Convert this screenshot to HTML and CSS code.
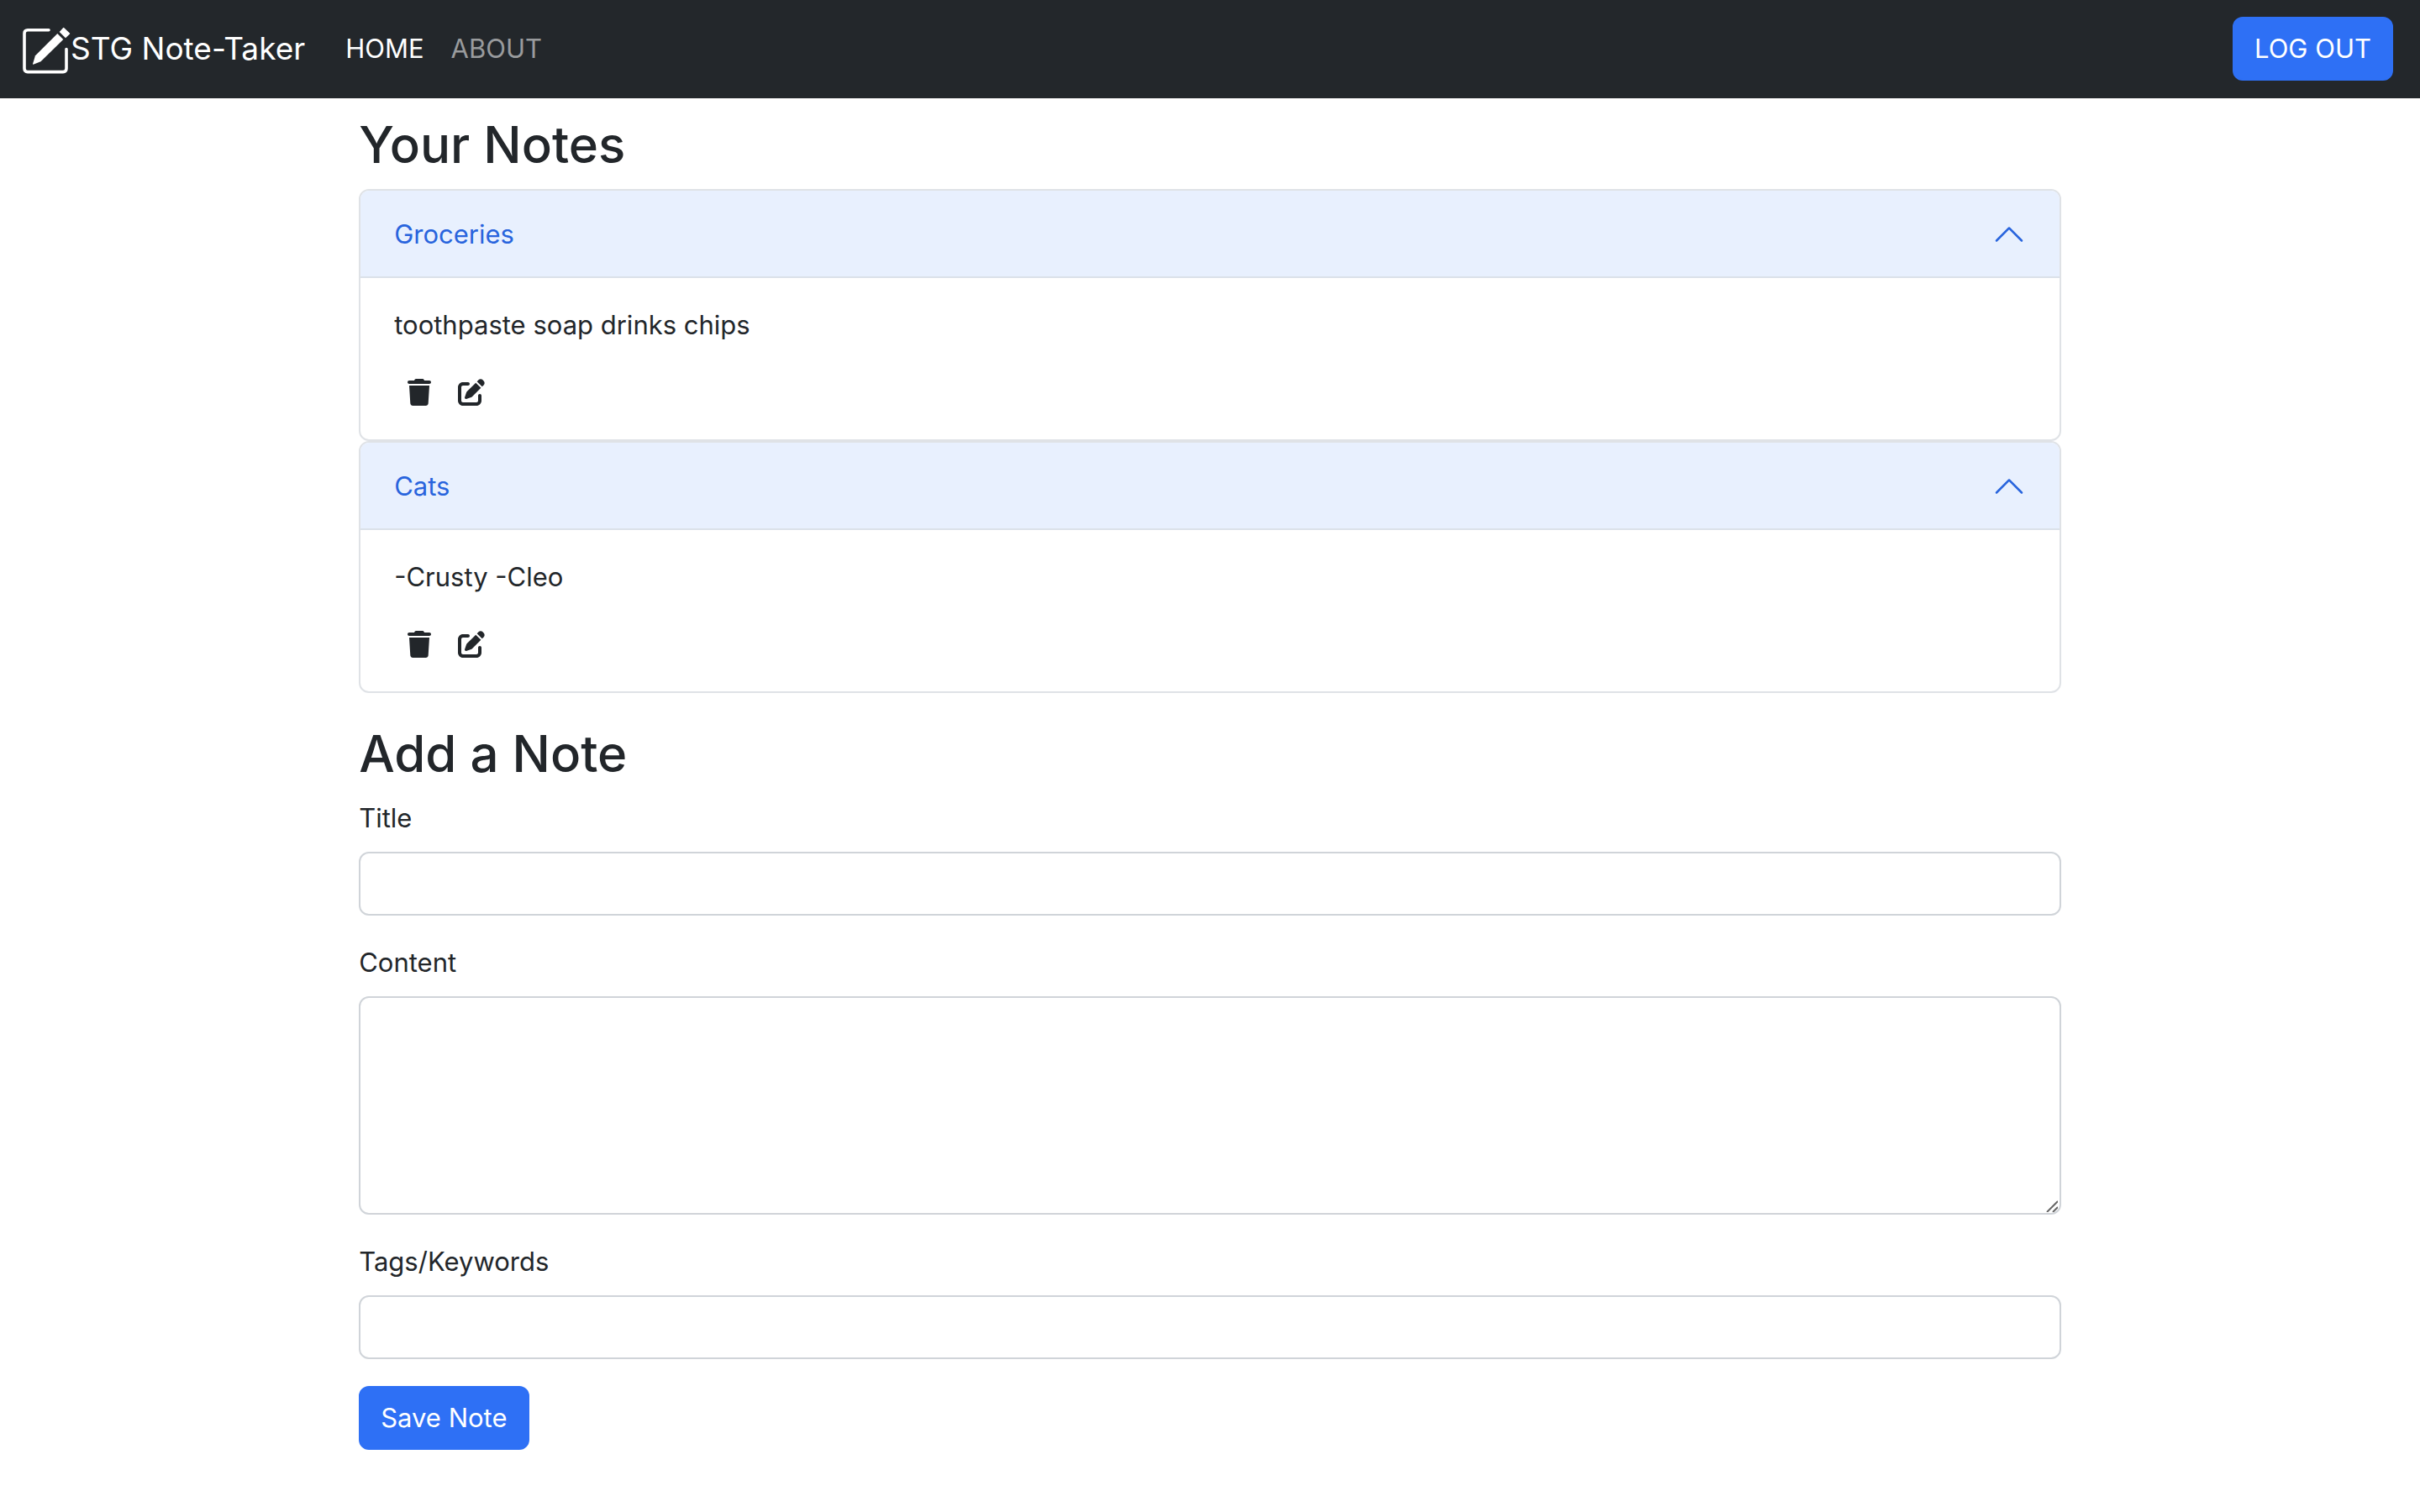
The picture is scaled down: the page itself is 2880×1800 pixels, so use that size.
FILE: index.html
```html
<!DOCTYPE html>
<html lang="en">
<head>
<meta charset="utf-8">
<meta name="viewport" content="width=device-width, initial-scale=1">
<title>STG Note-Taker</title>
<link rel="stylesheet" href="styles.css">
</head>
<body>
<svg class="sprite" aria-hidden="true">
  <symbol id="trash" viewBox="0 0 448 512"><path d="M135.2 17.7L128 32H32C14.3 32 0 46.3 0 64S14.3 96 32 96H416c17.7 0 32-14.3 32-32s-14.3-32-32-32H320l-7.2-14.3C307.4 6.8 296.3 0 284.2 0H163.8c-12.1 0-23.2 6.8-28.6 17.7zM416 128H32L53.2 467c1.6 25.3 22.6 45 47.9 45H346.9c25.3 0 46.3-19.7 47.9-45L416 128z"/></symbol>
  <symbol id="edit" viewBox="0 0 512 512"><path d="M471.6 21.7c-21.9-21.9-57.3-21.9-79.2 0L362.3 51.7l97.9 97.9 30.1-30.1c21.9-21.9 21.9-57.3 0-79.2L471.6 21.7zm-299.2 220c-6.1 6.1-10.8 13.6-13.5 21.9l-29.6 88.8c-2.9 8.6-.6 18.1 5.8 24.6s15.9 8.7 24.6 5.8l88.8-29.6c8.2-2.7 15.7-7.4 21.9-13.5L437.7 172.3 339.7 74.3 172.4 241.7zM96 64C43 64 0 107 0 160V416c0 53 43 96 96 96H352c53 0 96-43 96-96V320c0-17.7-14.3-32-32-32s-32 14.3-32 32v96c0 17.7-14.3 32-32 32H96c-17.7 0-32-14.3-32-32V160c0-17.7 14.3-32 32-32h96c17.7 0 32-14.3 32-32s-14.3-32-32-32H96z"/></symbol>
  <symbol id="chevron" viewBox="0 0 16 16"><path transform="rotate(180 8 8)" d="M1.646 4.646a.5.5 0 0 1 .708 0L8 10.293l5.646-5.647a.5.5 0 0 1 .708.708l-6 6a.5.5 0 0 1-.708 0l-6-6a.5.5 0 0 1 0-.708z"/></symbol>
</svg>

<header class="navbar">
  <a class="brand" href="#">
    <svg class="brand-icon" viewBox="0 0 58 60" aria-hidden="true">
      <path d="M32 7.7H7Q3 7.7 3 11.7V53.6Q3 57.6 7 57.6H49Q53 57.6 53 53.6V30.5" fill="none" stroke="currentColor" stroke-width="3.6" stroke-linecap="round"/>
      <path d="M42.3 12L49.3 19L22.5 45.2L13.6 48.8Q12.8 48.8 13 48L16 38.3Z" fill="currentColor"/>
      <path d="M44.7 10L49 5.2Q49.7 4.5 50.4 5.2L57 11.5Q57.5 12 57 12.5L52 17.3Z" fill="currentColor"/>
    </svg>
    <span>STG Note-Taker</span>
  </a>
  <nav class="nav">
    <a class="nav-link active" href="#">HOME</a>
    <a class="nav-link" href="#">ABOUT</a>
  </nav>
  <button class="btn" type="button">LOG OUT</button>
</header>

<main class="container">
  <h2>Your Notes</h2>
  <section class="notes">
    <article class="note">
      <button class="note-header" type="button" aria-expanded="true">Groceries <svg class="chevron" aria-hidden="true"><use href="#chevron"/></svg></button>
      <div class="note-body">
        <p>toothpaste soap drinks chips</p>
        <div class="note-actions">
          <button type="button" class="icon-btn" aria-label="Delete"><svg class="trash" aria-hidden="true"><use href="#trash"/></svg></button>
          <button type="button" class="icon-btn" aria-label="Edit"><svg class="edit" aria-hidden="true"><use href="#edit"/></svg></button>
        </div>
      </div>
    </article>
    <article class="note">
      <button class="note-header" type="button" aria-expanded="true">Cats <svg class="chevron" aria-hidden="true"><use href="#chevron"/></svg></button>
      <div class="note-body">
        <p>-Crusty -Cleo</p>
        <div class="note-actions">
          <button type="button" class="icon-btn" aria-label="Delete"><svg class="trash" aria-hidden="true"><use href="#trash"/></svg></button>
          <button type="button" class="icon-btn" aria-label="Edit"><svg class="edit" aria-hidden="true"><use href="#edit"/></svg></button>
        </div>
      </div>
    </article>
  </section>

  <h2>Add a Note</h2>
  <form class="note-form">
    <div class="field">
      <label for="title">Title</label>
      <input class="control" id="title" type="text">
    </div>
    <div class="field">
      <label for="content">Content</label>
      <div class="textarea-wrap">
        <textarea class="control" id="content"></textarea>
        <svg class="grip" viewBox="0 0 14 14" aria-hidden="true"><path d="M1 14L14 1M8 14L14 8"/></svg>
      </div>
    </div>
    <div class="field">
      <label for="tags">Tags/Keywords</label>
      <input class="control" id="tags" type="text">
    </div>
    <button class="btn" type="submit">Save Note</button>
  </form>
</main>
</body>
</html>
```
FILE: styles.css
```css
* {
  box-sizing: border-box;
}

body {
  margin: 0;
  background: #fff;
  color: #22262a;
  font-family: Inter, "Liberation Sans", sans-serif;
  font-size: 31px;
  line-height: 48px;
}

button,
input,
textarea {
  margin: 0;
  font: inherit;
  color: inherit;
}

button {
  cursor: pointer;
}

svg {
  display: block;
  fill: currentColor;
}

.sprite {
  position: absolute;
  width: 0;
  height: 0;
}

/* Top bar */
.navbar {
  display: flex;
  align-items: center;
  padding: 20px 32px 21px 26px;
  background: #23272b;
  color: #fff;
}

.brand {
  display: flex;
  align-items: center;
  margin-right: 32px;
  color: #fff;
  font-size: 37px;
  text-decoration: none;
}

.brand-icon {
  width: 58px;
  height: 60px;
}

.nav {
  display: flex;
  flex: 1;
}

.nav-link {
  padding: 0 16px;
  color: #999b9d;
  text-decoration: none;
}

.nav-link.active {
  color: #fff;
}

.btn {
  padding: 12px 24px;
  border: 2px solid #2e70f5;
  border-radius: 12px;
  background: #2e70f5;
  color: #fff;
}

/* Page column */
.container {
  width: 72%;
  margin: 0 auto;
  padding: 15px 24px 32px;
}

h2 {
  margin: 0 0 13px;
  font-size: 60px;
  font-weight: 500;
  line-height: 80px;
}

.notes {
  margin-bottom: 32px;
}

.note {
  overflow: hidden;
  border: 2px solid #dfe2e6;
  border-radius: 12px;
}

.note-header {
  display: flex;
  align-items: center;
  justify-content: space-between;
  width: 100%;
  padding: 28px 40px;
  border: 0;
  background: #e8f0fe;
  box-shadow: inset 0 -2px 0 #dbe1e9;
  color: #2864dd;
}

.chevron {
  width: 40px;
  height: 40px;
}

.note-body {
  padding: 32px 40px;
}

.note-body p {
  margin: 0 0 32px;
}

.note-actions {
  display: flex;
}

.icon-btn {
  display: flex;
  align-items: center;
  height: 48px;
  padding: 0 16px;
  border: 0;
  background: none;
}

.trash {
  width: 28px;
  height: 32px;
}

.edit {
  width: 32px;
  height: 32px;
}

/* Form */
.field {
  display: flex;
  flex-direction: column;
  gap: 16px;
  margin-bottom: 32px;
}

.control {
  display: block;
  width: 100%;
  padding: 12px 24px;
  border: 2px solid #d0d4d9;
  border-radius: 12px;
  background: #fff;
}

.textarea-wrap {
  position: relative;
}

textarea.control {
  height: 260px;
  resize: none;
}

.grip {
  position: absolute;
  right: 4px;
  bottom: 3px;
  width: 14px;
  height: 14px;
  fill: none;
  stroke: #666;
  stroke-width: 2;
  pointer-events: none;
}
```
